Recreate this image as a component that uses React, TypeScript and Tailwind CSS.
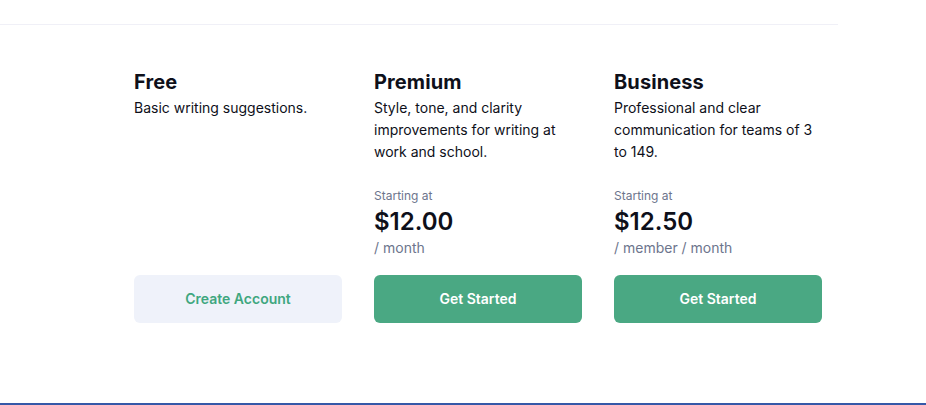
import React from "react"

type Plan = {
  name: string
  desc: string
  price?: string
  unit?: string
  cta: string
  primary: boolean
}

const plans: Plan[] = [
  { name: "Free", desc: "Basic writing suggestions.", cta: "Create Account", primary: false },
  {
    name: "Premium",
    desc: "Style, tone, and clarity improvements for writing at work and school.",
    price: "$12.00",
    unit: "/ month",
    cta: "Get Started",
    primary: true,
  },
  {
    name: "Business",
    desc: "Professional and clear communication for teams of 3 to 149.",
    price: "$12.50",
    unit: "/ member / month",
    cta: "Get Started",
    primary: true,
  },
]

export default function App() {
  return (
    <main
      className="h-[405px] w-full bg-white border-b-2 border-[#3558a8] flex flex-col"
      style={{ fontFamily: "Inter, 'Noto Sans', sans-serif" }}
    >
      {/* top divider */}
      <div className="mt-6 w-[838px] border-t border-[#f0f0f7]" />

      <div className="grid grid-cols-[208px_208px_208px] gap-8 pl-[134px] pt-[43px]">
        {plans.map((p) => (
          <div key={p.name} className="flex flex-col">
            <div className="flex-1">
              <h2 className="text-[20px] leading-7 font-bold text-[#0e101a] tracking-[0.1px]">{p.name}</h2>
              <p className="mt-px text-sm leading-[22px] text-[#0e101a]">{p.desc}</p>

              {p.price && (
                <div className="mt-[25px] flex flex-col">
                  <span className="text-xs leading-4 text-[#6d758d]">Starting at</span>
                  <span className="mt-0.5 text-2xl leading-8 font-semibold text-[#0e101a]">{p.price}</span>
                  <span className="text-sm leading-5 text-[#6d758d]">{p.unit}</span>
                </div>
              )}
            </div>

            <button
              className={
                p.primary
                  ? "mt-[17px] h-12 w-full rounded-md bg-[#4aa883] text-sm font-semibold text-white"
                  : "mt-[17px] h-12 w-full rounded-md bg-[#eff2fa] text-sm font-semibold text-[#3fa77f]"
              }
            >
              {p.cta}
            </button>
          </div>
        ))}
      </div>
    </main>
  )
}
